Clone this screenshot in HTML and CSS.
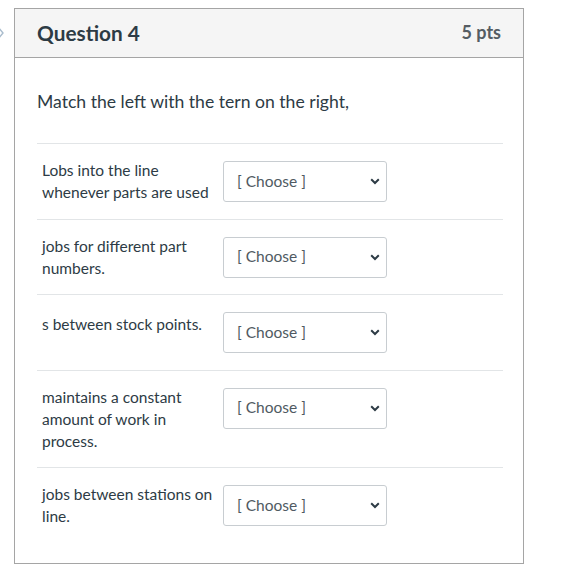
FILE: index.html
```html
<!DOCTYPE html>
<html>
<head>
<meta charset="utf-8">
<link rel="stylesheet" href="styles.css">
</head>
<body>
<div class="page">
  <svg class="nav-arrow" width="8" height="14" viewBox="0 0 8 14"><path d="M0 1 L5 7 L0 13" fill="none" stroke="#a9bccd" stroke-width="1.4"/></svg>
  <div class="card">
    <div class="card-header">
      <h2 class="q-title">Question 4</h2>
      <span class="q-points">5 pts</span>
    </div>
    <div class="card-body">
      <p class="q-text">Match the left with the tern on the right,</p>
      <div class="answers">
        <div class="answer-row">
          <div class="answer-label">Lobs into the line whenever parts are used</div>
          <div class="fake-select"><span>[ Choose ]</span><svg class="chev" width="10" height="7" viewBox="0 0 10 7"><path d="M1.2 1.3 L5 5 L8.8 1.3" fill="none" stroke="#2d3b45" stroke-width="2"/></svg></div>
        </div>
        <div class="answer-row">
          <div class="answer-label">jobs for different part numbers.</div>
          <div class="fake-select"><span>[ Choose ]</span><svg class="chev" width="10" height="7" viewBox="0 0 10 7"><path d="M1.2 1.3 L5 5 L8.8 1.3" fill="none" stroke="#2d3b45" stroke-width="2"/></svg></div>
        </div>
        <div class="answer-row">
          <div class="answer-label single">s between stock points.</div>
          <div class="fake-select"><span>[ Choose ]</span><svg class="chev" width="10" height="7" viewBox="0 0 10 7"><path d="M1.2 1.3 L5 5 L8.8 1.3" fill="none" stroke="#2d3b45" stroke-width="2"/></svg></div>
        </div>
        <div class="answer-row">
          <div class="answer-label">maintains a constant amount of work in process.</div>
          <div class="fake-select"><span>[ Choose ]</span><svg class="chev" width="10" height="7" viewBox="0 0 10 7"><path d="M1.2 1.3 L5 5 L8.8 1.3" fill="none" stroke="#2d3b45" stroke-width="2"/></svg></div>
        </div>
        <div class="answer-row">
          <div class="answer-label">jobs between stations on line.</div>
          <div class="fake-select"><span>[ Choose ]</span><svg class="chev" width="10" height="7" viewBox="0 0 10 7"><path d="M1.2 1.3 L5 5 L8.8 1.3" fill="none" stroke="#2d3b45" stroke-width="2"/></svg></div>
        </div>
      </div>
    </div>
  </div>
</div>
</body>
</html>
```

FILE: styles.css
```css
html, body {
  margin: 0;
  padding: 0;
  background: #ffffff;
}

body {
  font-family: Lato, "Liberation Sans", sans-serif;
  color: #2d3b45;
}

.page {
  position: relative;
  padding: 8px 0 0 14px;
}

.nav-arrow {
  position: absolute;
  left: -2px;
  top: 26px;
}

.card {
  width: 510px;
  height: 556px;
  border: 1px solid #a5a5a5;
  box-sizing: border-box;
  display: flex;
  flex-direction: column;
}

.card-header {
  height: 49px;
  box-sizing: border-box;
  background: #f5f5f5;
  border-bottom: 1px solid #a5a5a5;
  display: flex;
  align-items: center;
  justify-content: space-between;
  padding: 0 22px 2px;
}

.q-title {
  margin: 0;
  font-size: 20.8px;
  font-weight: 700;
  color: #2d3b45;
}

.q-points {
  font-size: 18px;
  font-weight: 700;
  color: #555d63;
}

.card-body {
  padding: 0 20px 0 22px;
}

.q-text {
  margin: 31px 0 28px;
  font-size: 17.6px;
  line-height: 26px;
  color: #2d3b45;
}

.answer-row {
  display: flex;
  align-items: flex-start;
  border-top: 1px solid #e2e5e7;
  padding: 15px 0 15.5px;
}

.answer-label {
  width: 176px;
  padding-left: 5px;
  font-size: 15.5px;
  line-height: 22px;
  color: #2d3b45;
}

.answer-label.single {
  padding-top: 3px;
}

.fake-select {
  margin: 2px 0 1px 5px;
  width: 164px;
  height: 41px;
  box-sizing: border-box;
  border: 1px solid #c8cdd1;
  border-radius: 3px;
  display: flex;
  align-items: center;
  justify-content: space-between;
  padding: 0 6px 0 13px;
  font-size: 15.5px;
  color: #4f5a62;
}

.fake-select span {
  margin-top: -2px;
}
```
